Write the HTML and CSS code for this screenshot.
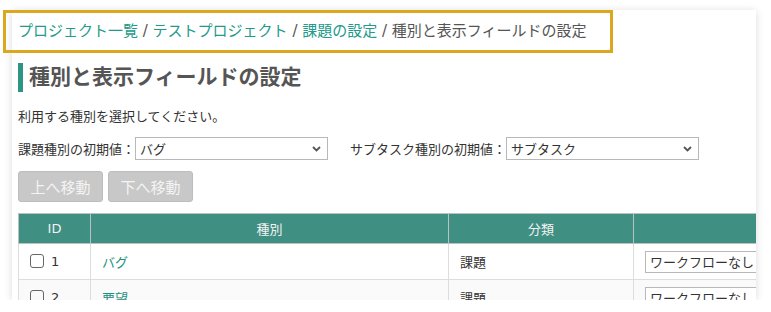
FILE: index.html
```html
<!DOCTYPE html>
<html lang="ja">
<head>
<meta charset="UTF-8">
<title>種別と表示フィールドの設定</title>
<link rel="stylesheet" href="styles.css">
</head>
<body>
    <div class="panel">
        <div class="breadcrumb">
            <a href="#">プロジェクト一覧</a> / <a href="#">テストプロジェクト</a> / <a href="#">課題の設定</a> / <span>種別と表示フィールドの設定</span>
        </div>
        <h2 class="heading">種別と表示フィールドの設定</h2>
        <p class="lead">利用する種別を選択してください。</p>
        <div class="defaults">
            <label class="field">課題種別の初期値：<span class="select wide"><span>バグ</span><svg width="9" height="6" viewBox="0 0 9 6"><path d="M1 1l3.5 3.5L8 1" fill="none" stroke="#555" stroke-width="1.8"/></svg></span></label>
            <label class="field">サブタスク種別の初期値：<span class="select wide"><span>サブタスク</span><svg width="9" height="6" viewBox="0 0 9 6"><path d="M1 1l3.5 3.5L8 1" fill="none" stroke="#555" stroke-width="1.8"/></svg></span></label>
        </div>
        <div class="buttons">
            <button class="btn" disabled>上へ移動</button>
            <button class="btn" disabled>下へ移動</button>
        </div>
        <table class="types">
            <thead>
                <tr>
                    <th class="col-id">ID</th>
                    <th class="col-name">種別</th>
                    <th class="col-kind">分類</th>
                    <th class="col-flow"></th>
                </tr>
            </thead>
            <tbody>
                <tr>
                    <td><span class="check"></span><span class="num">1</span></td>
                    <td><a href="#">バグ</a></td>
                    <td>課題</td>
                    <td><span class="select flow"><span>ワークフローなし</span></span></td>
                </tr>
                <tr class="alt">
                    <td><span class="check"></span><span class="num">2</span></td>
                    <td><a href="#">要望</a></td>
                    <td>課題</td>
                    <td><span class="select flow"><span>ワークフローなし</span></span></td>
                </tr>
            </tbody>
        </table>
    </div>
    <div class="highlight"></div>
</body>
</html>
```

FILE: styles.css
```css
/* ページ全体 */
body {
    margin: 0;
    background: #fff;
    font-family: "DejaVu Sans", "Noto Sans CJK JP", sans-serif;
    color: #333;
}
a {
    color: #1f8f80;
    text-decoration: none;
}
/* 白いパネル */
.panel {
    margin: 10px 0 0 12px;
    width: 744px;
    height: 290px;
    padding-left: 6px;
    box-sizing: border-box;
    overflow: hidden;
    background: #fff;
    box-shadow: 0 1px 8px rgba(0, 0, 0, 0.14);
}
/* パンくず */
.breadcrumb {
    padding-top: 11px;
    font-size: 15px;
    line-height: 20px;
    color: #555;
    white-space: nowrap;
}
.breadcrumb a {
    color: #239a8a;
}
/* 見出し */
.heading {
    margin: 22px 0 0;
    height: 29px;
    border-left: 5px solid #2e9483;
    padding-left: 6px;
    font-size: 21px;
    line-height: 29px;
    font-weight: bold;
    color: #555;
}
.lead {
    margin: 15px 0 0;
    font-size: 13px;
    line-height: 20px;
}
/* 初期値の選択 */
.defaults {
    display: flex;
    gap: 22px;
    margin-top: 10px;
}
.field {
    display: flex;
    align-items: center;
    font-size: 13px;
}
.select {
    display: flex;
    align-items: center;
    justify-content: space-between;
    height: 23px;
    border: 1px solid #b8b8b8;
    box-sizing: border-box;
    padding: 0 6px 0 4px;
    background: #fff;
    font-size: 13px;
    color: #333;
}
.select.wide {
    width: 193px;
}
.select.flow {
    width: 150px;
    height: 22px;
}
/* ボタン */
.buttons {
    display: flex;
    gap: 5px;
    margin-top: 11px;
}
.btn {
    width: 85px;
    height: 31px;
    border: 1px solid #bdbdbd;
    border-radius: 3px;
    background: #c8c8c8;
    color: #f4f4f4;
    font-family: inherit;
    font-size: 15px;
    padding: 0;
}
/* テーブル */
.types {
    margin-top: 11px;
    border-collapse: collapse;
    table-layout: fixed;
    width: 800px;
    font-size: 13px;
}
.types th {
    height: 29px;
    background: #3f8f82;
    color: #f2f2f2;
    font-weight: normal;
    border: 1px solid #b5c4c1;
    padding: 0;
}
.types td {
    height: 35px;
    border: 1px solid #ddd;
    padding: 0 0 0 11px;
}
.types tr.alt td {
    background: #fafafa;
}
.col-id { width: 71px; }
.col-name { width: 357px; }
.col-kind { width: 184px; }
.check {
    display: inline-block;
    width: 12px;
    height: 12px;
    border: 1px solid #666;
    border-radius: 3px;
    vertical-align: -2px;
}
.num {
    margin-left: 7px;
}
/* 強調の枠 */
.highlight {
    position: absolute;
    left: 3px;
    top: 10px;
    width: 604px;
    height: 37px;
    border: 3px solid #dba71c;
}
```
